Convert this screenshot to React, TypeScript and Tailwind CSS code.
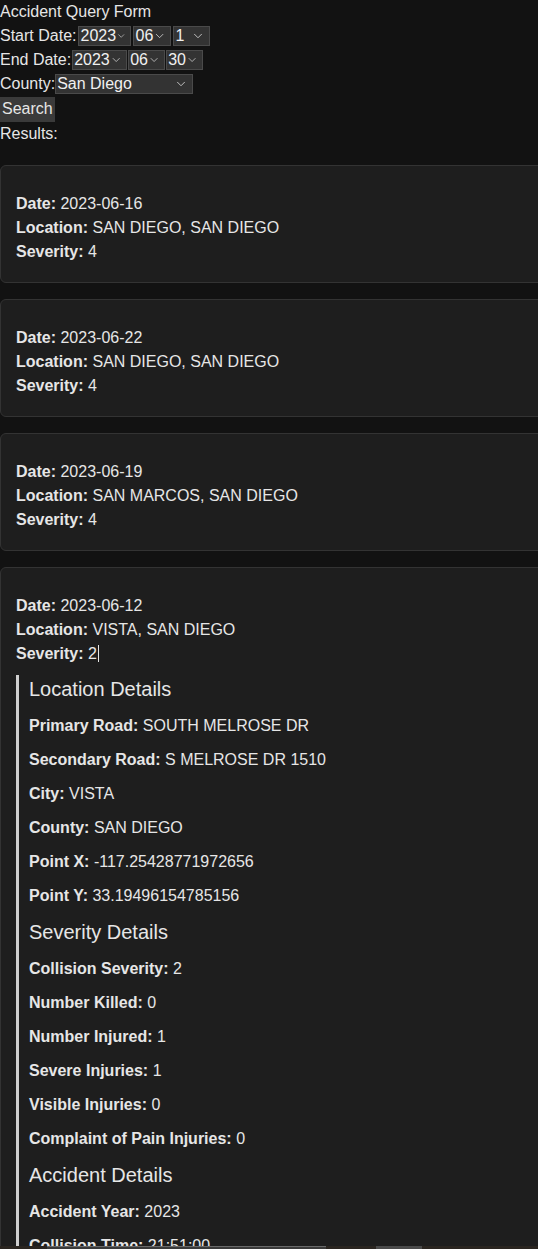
import { ChevronDown } from "lucide-react";

interface Accident {
  date: string;
  location: string;
  severity: number;
}

const accidents: Accident[] = [
  { date: "2023-06-16", location: "SAN DIEGO, SAN DIEGO", severity: 4 },
  { date: "2023-06-22", location: "SAN DIEGO, SAN DIEGO", severity: 4 },
  { date: "2023-06-19", location: "SAN MARCOS, SAN DIEGO", severity: 4 },
];

const locationDetails = [
  ["Primary Road", "SOUTH MELROSE DR"],
  ["Secondary Road", "S MELROSE DR 1510"],
  ["City", "VISTA"],
  ["County", "SAN DIEGO"],
  ["Point X", "-117.25428771972656"],
  ["Point Y", "33.19496154785156"],
];

const severityDetails = [
  ["Collision Severity", "2"],
  ["Number Killed", "0"],
  ["Number Injured", "1"],
  ["Severe Injuries", "1"],
  ["Visible Injuries", "0"],
  ["Complaint of Pain Injuries", "0"],
];

const accidentDetails = [
  ["Accident Year", "2023"],
  ["Collision Time", "21:51:00"],
];

const FakeSelect = ({ value, width }: { value: string; width: string }) => (
  <div
    className={`flex h-5 items-center justify-between border border-[#4a4a4a] bg-[#333333] pl-[1px] pr-[4px] leading-none text-[#f0f0f0] ${width}`}
  >
    <span>{value}</span>
    <ChevronDown size={14} strokeWidth={1.4} className="text-[#dddddd]" />
  </div>
);

const Row = ({ label, value }: { label: string; value: string }) => (
  <div className="h-6 leading-6">
    <b>{label}:</b> {value}
  </div>
);

const Card = ({ accident }: { accident: Accident }) => (
  <div className="rounded-md border border-[#333333] bg-[#1e1e1e] px-[15px] pb-[18px] pt-[26px]">
    <Row label="Date" value={accident.date} />
    <Row label="Location" value={accident.location} />
    <Row label="Severity" value={String(accident.severity)} />
  </div>
);

const Section = ({ title, rows }: { title: string; rows: string[][] }) => (
  <>
    <h3 className="h-[29px] pt-[1px] text-xl leading-[27px]">{title}</h3>
    {rows.map(([label, value]) => (
      <Row key={label} label={label} value={value} />
    ))}
  </>
);

export default function App() {
  return (
    <div className="min-h-screen w-[538px] overflow-hidden bg-[#121212] font-['Liberation_Sans',Arial,sans-serif] text-base text-[#e6e6e6]">
      <div className="h-6 leading-6">Accident Query Form</div>
      <div className="flex h-6 items-center gap-[2px]">
        <span>Start Date:</span>
        <FakeSelect value="2023" width="w-[53px]" />
        <FakeSelect value="06" width="w-[38px]" />
        <FakeSelect value="1" width="w-[37px]" />
      </div>
      <div className="flex h-6 items-center gap-[1px]">
        <span>End Date:</span>
        <FakeSelect value="2023" width="w-[55px]" />
        <FakeSelect value="06" width="w-[37px]" />
        <FakeSelect value="30" width="w-[37px]" />
      </div>
      <div className="flex h-6 items-center">
        <span>County:</span>
        <FakeSelect value="San Diego" width="w-[138px]" />
      </div>
      <div className="flex h-[26px] items-center">
        <button className="h-[25px] bg-[#3a3a3a] px-[2px] text-[#e6e6e6]">Search</button>
      </div>
      <div className="h-6 leading-6">Results:</div>

      <div className="mt-[19px] flex w-[560px] flex-col gap-4">
        {accidents.map((a) => (
          <Card key={a.date} accident={a} />
        ))}
        <div className="rounded-md border border-[#333333] bg-[#1e1e1e] px-[15px] pt-[26px]">
          <Row label="Date" value="2023-06-12" />
          <Row label="Location" value="VISTA, SAN DIEGO" />
          <div className="h-6 leading-6">
            <b>Severity:</b> 2
            <span className="ml-[1px] inline-block h-[17px] w-px translate-y-[3px] bg-[#e6e6e6]" />
          </div>
          <div className="mt-[9px] flex flex-col gap-[10px] border-l-[3px] border-[#cfcfcf] pb-4 pl-[10px]">
            <Section title="Location Details" rows={locationDetails} />
            <Section title="Severity Details" rows={severityDetails} />
            <Section title="Accident Details" rows={accidentDetails} />
          </div>
        </div>
      </div>

      <div className="fixed bottom-0 left-0 flex h-[3px] w-[538px] bg-[#2a2520]">
        <div className="ml-[47px] w-[279px] border-t border-[#6a6a6a] bg-[#3a3a3a]" />
        <div className="ml-[50px] w-[46px] bg-[#4a4a4a]" />
      </div>
    </div>
  );
}
